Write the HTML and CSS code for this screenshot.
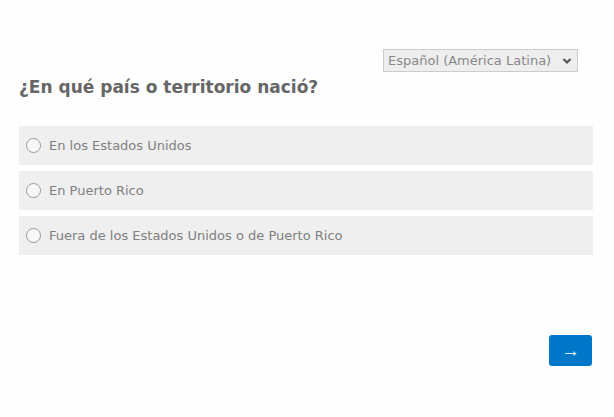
FILE: index.html
```html
<!DOCTYPE html>
<html lang="es">
<head>
    <meta charset="UTF-8">
    <meta name="viewport" content="width=device-width, initial-scale=1.0">
    <title>Encuesta</title>
    <link rel="stylesheet" href="styles.css">
</head>
<body>
    <div class="survey">
        <div class="lang-row">
            <div class="lang-select">
                <span>Español (América Latina)</span>
                <svg width="10" height="8" viewBox="0 0 10 8"><path d="M1.5 2 L5 5.5 L8.5 2" fill="none" stroke="#555" stroke-width="2.2"/></svg>
            </div>
        </div>

        <h1 class="question">¿En qué país o territorio nació?</h1>

        <div class="options">
            <label class="option"><span class="radio"></span>En los Estados Unidos</label>
            <label class="option"><span class="radio"></span>En Puerto Rico</label>
            <label class="option"><span class="radio"></span>Fuera de los Estados Unidos o de Puerto Rico</label>
        </div>

        <div class="nav">
            <button class="next">&rarr;</button>
        </div>
    </div>
</body>
</html>
```

FILE: styles.css
```css
body {
    margin: 0;
    padding: 0;
    background: #fefefe;
    font-family: 'DejaVu Sans', sans-serif;
    color: #777;
}

.survey {
    padding: 49px 21px 0 19px;
}

.lang-row {
    display: flex;
    justify-content: flex-end;
    padding-right: 15px;
}

.lang-select {
    display: flex;
    align-items: center;
    justify-content: space-between;
    height: 21px;
    padding: 0 5px 0 4px;
    width: 184px;
    background: #eeeeee;
    border: 1px solid #cccccc;
    font-size: 13px;
    color: #888;
}

.question {
    margin: 3px 0 27px;
    font-size: 17px;
    line-height: 24px;
    font-weight: bold;
    color: #666;
}

.options {
    display: flex;
    flex-direction: column;
    gap: 6px;
}

.option {
    display: flex;
    align-items: center;
    gap: 8px;
    height: 39px;
    padding-left: 7px;
    background: #efefef;
    font-size: 13px;
    color: #808080;
}

.radio {
    width: 13px;
    height: 13px;
    border: 1px solid #999;
    border-radius: 50%;
    background: #f7f7f7;
}

.nav {
    display: flex;
    justify-content: flex-end;
    margin-top: 80px;
    padding-right: 1px;
}

.next {
    width: 43px;
    height: 31px;
    border: none;
    border-radius: 3px;
    background: #0077c8;
    color: #fff;
    font-size: 19px;
    line-height: 31px;
    padding: 0;
}
```
